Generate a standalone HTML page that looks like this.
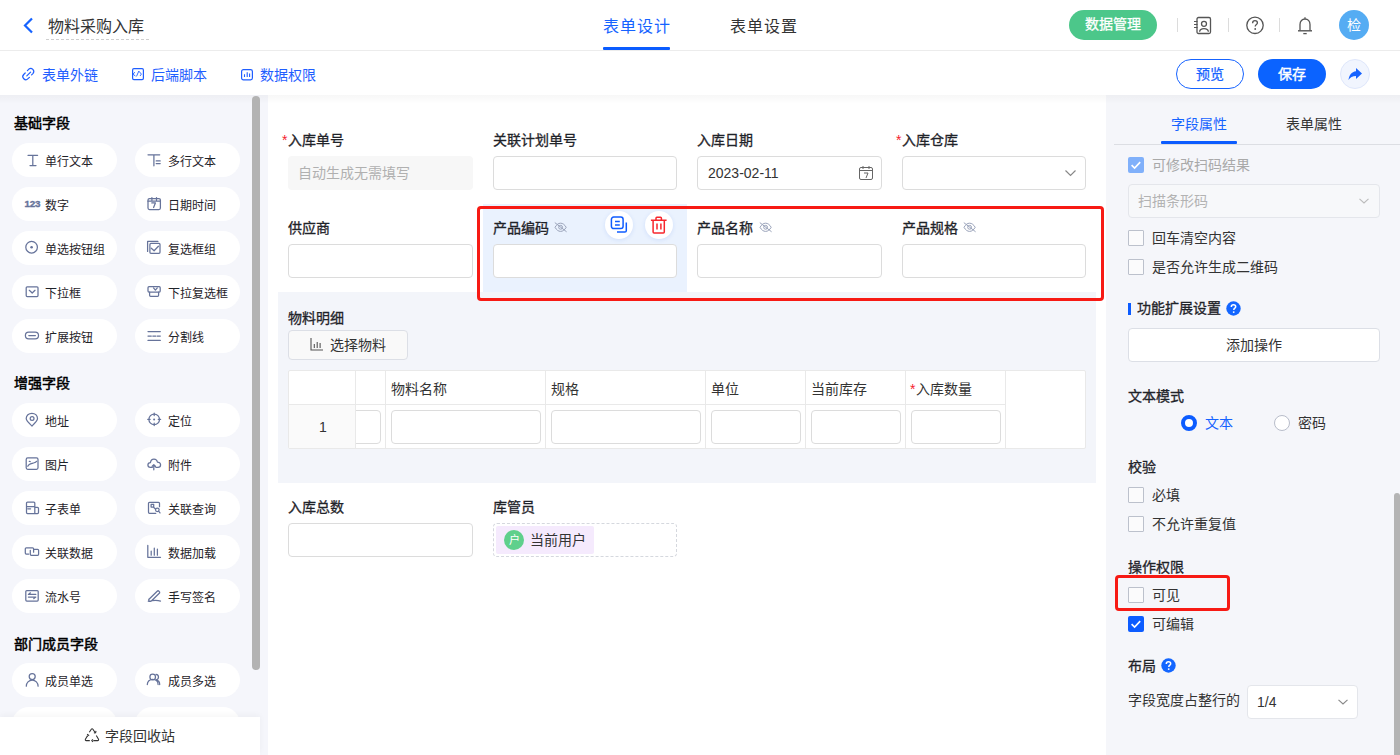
<!DOCTYPE html>
<html lang="zh-CN">
<head>
<meta charset="utf-8">
<style>
*{box-sizing:border-box;margin:0;padding:0}
html,body{width:1400px;height:755px;overflow:hidden;background:#fff}
body{position:relative;font-family:"Liberation Sans",sans-serif;color:#1f2329;font-size:14px}
.a{position:absolute;white-space:nowrap}
.t14{font-size:14px;line-height:20px}
.t16{font-size:16px;line-height:20px}
.t12{font-size:12px;line-height:20px}
.b{font-weight:bold}
.inp{background:#fff;border:1px solid #dcdcdc;border-radius:4px}
.lb{-webkit-text-stroke:0.3px #1f2329;color:#1f2329}
.pill{width:105px;height:34px;border-radius:17px;background:#fff}
.ptx{font-size:12px;line-height:20px;color:#1f2329}
svg{position:absolute;overflow:visible}
</style>
</head>
<body>
<!-- HEADER -->
<div class="a" style="left:0;top:0;width:1400px;height:51px;background:#fff;border-bottom:1px solid #ececec"></div>
<svg style="left:22px;top:17px" width="12" height="17" viewBox="0 0 12 17"><path d="M10 1.5 L3 8.5 L10 15.5" fill="none" stroke="#1663ff" stroke-width="2.2"/></svg>
<div class="a t16" style="left:48px;top:17px;color:#333">物料采购入库</div>
<div class="a" style="left:46px;top:39px;width:104px;height:1px;background:repeating-linear-gradient(90deg,#cfcfcf 0 3px,transparent 3px 5px)"></div>

<div class="a t16" style="left:603px;top:17px;color:#1663ff;letter-spacing:1px">表单设计</div>
<div class="a" style="left:603px;top:47px;width:67px;height:3px;background:#0a5cff;border-radius:1px"></div>
<div class="a t16" style="left:730px;top:17px;color:#333;letter-spacing:1px">表单设置</div>

<div class="a t14" style="left:1069px;top:10px;width:88px;height:30px;border-radius:15px;background:#4cc78a;color:#fff;text-align:center;line-height:29px;-webkit-text-stroke:0.3px #fff">数据管理</div>
<div class="a" style="left:1177px;top:18px;width:1px;height:14px;background:#dcdcdc"></div>
<div class="a" style="left:1228px;top:18px;width:1px;height:14px;background:#dcdcdc"></div>
<div class="a" style="left:1279px;top:18px;width:1px;height:14px;background:#dcdcdc"></div>
<!-- contacts icon -->
<svg style="left:1193px;top:16px" width="19" height="18" viewBox="0 0 19 18"><rect x="4" y="1.5" width="13.5" height="16" rx="1.5" fill="none" stroke="#555" stroke-width="1.3"/><circle cx="11" cy="7.8" r="2.5" fill="none" stroke="#555" stroke-width="1.3"/><path d="M6.6 15.8 C7 11.6 15 11.6 15.4 15.8" fill="none" stroke="#555" stroke-width="1.3"/><path d="M1 5.5h3.5M1 8.5h3.5M1 11.5h3.5" stroke="#555" stroke-width="1.1"/></svg>
<!-- help -->
<svg style="left:1246px;top:16px" width="18" height="18" viewBox="0 0 18 18"><circle cx="9" cy="9.3" r="8.2" fill="none" stroke="#555" stroke-width="1.3"/><path d="M6.6 7.2 C6.6 5.6 7.7 4.7 9 4.7 C10.4 4.7 11.4 5.6 11.4 6.9 C11.4 8.5 9.2 8.6 9.2 10.6" fill="none" stroke="#555" stroke-width="1.3"/><circle cx="9.2" cy="13" r="0.9" fill="#555"/></svg>
<!-- bell -->
<svg style="left:1297px;top:16px" width="16" height="19" viewBox="0 0 16 19"><path d="M8 1.2v1.6" stroke="#555" stroke-width="1.3"/><path d="M3 14.5 V8.5 C3 5.3 5.2 3 8 3 C10.8 3 13 5.3 13 8.5 V14.5" fill="none" stroke="#555" stroke-width="1.3"/><path d="M1 14.8h14" stroke="#555" stroke-width="1.4"/><path d="M6.3 17.6h3.4" stroke="#555" stroke-width="1.3"/></svg>
<div class="a t14" style="left:1339px;top:10px;width:30px;height:30px;border-radius:50%;background:#55acf3;color:#fff;text-align:center;line-height:30px">检</div>

<!-- TOOLBAR -->
<div class="a" style="left:0;top:51px;width:1400px;height:44px;background:#fff"></div>
<svg style="left:22px;top:67px" width="14" height="14" viewBox="0 0 14 14"><path d="M5.4 3.6L6.9 2.1A3 3 0 0 1 11.1 6.3L9.6 7.8M7.4 10.3L6 11.7A3 3 0 0 1 1.7 7.5L3.2 6M4.8 8.9L8.6 5.1" fill="none" stroke="#1f5eff" stroke-width="1.2" stroke-linecap="round"/></svg>
<div class="a t14" style="left:42px;top:65px;color:#1f5eff">表单外链</div>
<svg style="left:132px;top:68px" width="12" height="12" viewBox="0 0 12 12"><rect x="0.6" y="0.6" width="10.8" height="11" rx="1.3" fill="none" stroke="#1f5eff" stroke-width="1.2"/><path d="M3 4.2L0.9 6.2 3.4 8M4.5 8.4L6.8 3.1 9.4 6.1 8 8" fill="none" stroke="#1f5eff" stroke-width="0.9"/></svg>
<div class="a t14" style="left:151px;top:65px;color:#1f5eff">后端脚本</div>
<svg style="left:241px;top:69px" width="12" height="11" viewBox="0 0 12 11"><rect x="0.6" y="0.6" width="10.8" height="10.2" rx="1.8" fill="none" stroke="#1f5eff" stroke-width="1.2"/><path d="M3.5 5.3v2.6M6.2 3.2v4.7M8.6 4.6v3.3" stroke="#1f5eff" stroke-width="1.1"/></svg>
<div class="a t14" style="left:260px;top:65px;color:#1f5eff">数据权限</div>

<div class="a t14" style="left:1176px;top:59px;width:68px;height:30px;border:1px solid #1663ff;border-radius:15px;color:#1663ff;text-align:center;line-height:28px;-webkit-text-stroke:0.25px #1663ff">预览</div>
<div class="a t14" style="left:1258px;top:59px;width:68px;height:30px;border-radius:15px;background:#0b63ff;color:#fff;text-align:center;line-height:30px;-webkit-text-stroke:0.4px #fff">保存</div>
<div class="a" style="left:1340px;top:59px;width:30px;height:30px;border-radius:50%;background:#f1f5fe;border:1px solid #dfe7fb"></div>
<svg style="left:1347px;top:66px" width="16" height="16" viewBox="0 0 16 16"><path d="M9 2 L15 7.5 L9 13 V10 C5.5 10 3.2 11.2 1.5 14 C2 9.5 4.5 5.8 9 5.3 Z" fill="#1663ff"/></svg>

<!-- BODY -->
<div id="side" class="a" style="left:0;top:95px;width:268px;height:660px;background:#f5f6fb"></div>
<div id="canvas" class="a" style="left:268px;top:95px;width:838px;height:660px;background:#fff"></div>
<div id="right" class="a" style="left:1106px;top:95px;width:294px;height:660px;background:#f5f6fa"></div>
<div class="a" style="left:0;top:95px;width:1400px;height:9px;background:linear-gradient(rgba(0,0,0,0.03),rgba(0,0,0,0))"></div>

<!--CANVAS-->
<div class="a" style="left:483px;top:204px;width:204px;height:88px;background:#eaf2fe"></div>
<div class="a" style="left:278px;top:292px;width:818px;height:191px;background:#f3f5fa"></div>
<div class="a t14" style="left:282px;top:130px;color:#f5222d">*</div>
<div class="a t14 lb" style="left:288px;top:130px">入库单号</div>
<div class="a" style="left:288px;top:156px;width:185px;height:34px;background:#f7f7f7;border-radius:4px"></div>
<div class="a t14" style="left:298px;top:163px;color:#b0b0b0">自动生成无需填写</div>
<div class="a t14 lb" style="left:493px;top:130px">关联计划单号</div>
<div class="a inp" style="left:493px;top:156px;width:184px;height:34px;"></div>
<div class="a t14 lb" style="left:697px;top:130px">入库日期</div>
<div class="a inp" style="left:697px;top:156px;width:185px;height:34px;"></div>
<div class="a t14" style="left:708px;top:163px;color:#333">2023-02-11</div>
<svg style="left:858px;top:165px" width="16" height="16" viewBox="0 0 16 16"><rect x="1.5" y="2.5" width="13" height="12" rx="1.5" fill="none" stroke="#666" stroke-width="1"/><path d="M1.5 5.5h13M5 1v3M11 1v3M6 8h4l-2 5" fill="none" stroke="#666" stroke-width="1"/></svg>
<div class="a t14" style="left:896px;top:130px;color:#f5222d">*</div>
<div class="a t14 lb" style="left:902px;top:130px">入库仓库</div>
<div class="a inp" style="left:902px;top:156px;width:184px;height:34px;"></div>
<svg style="left:1064px;top:168px" width="13" height="10" viewBox="0 0 13 10"><path d="M1.5 2.5l5 5 5-5" fill="none" stroke="#888" stroke-width="1.2"/></svg>
<div class="a t14 lb" style="left:288px;top:218px">供应商</div>
<div class="a inp" style="left:288px;top:244px;width:185px;height:34px;"></div>
<div class="a t14 lb" style="left:493px;top:218px">产品编码</div>
<svg style="left:554px;top:222px" width="14" height="11" viewBox="0 0 14 11"><path d="M1 5.3C2.6 2.6 4.4 1.2 6.6 1.2S10.6 2.6 12.2 5.3C10.6 8 8.8 9.4 6.6 9.4S2.6 8 1 5.3Z" fill="none" stroke="#9aa3ba" stroke-width="1"/><circle cx="6.6" cy="5.3" r="1.9" fill="none" stroke="#9aa3ba" stroke-width="1"/><path d="M0.8 0.6L12.6 9.8" stroke="#9aa3ba" stroke-width="1"/></svg>
<div class="a inp" style="left:493px;top:244px;width:184px;height:34px;"></div>
<div class="a t14 lb" style="left:697px;top:218px">产品名称</div>
<svg style="left:759px;top:222px" width="14" height="11" viewBox="0 0 14 11"><path d="M1 5.3C2.6 2.6 4.4 1.2 6.6 1.2S10.6 2.6 12.2 5.3C10.6 8 8.8 9.4 6.6 9.4S2.6 8 1 5.3Z" fill="none" stroke="#9aa3ba" stroke-width="1"/><circle cx="6.6" cy="5.3" r="1.9" fill="none" stroke="#9aa3ba" stroke-width="1"/><path d="M0.8 0.6L12.6 9.8" stroke="#9aa3ba" stroke-width="1"/></svg>
<div class="a inp" style="left:697px;top:244px;width:185px;height:34px;"></div>
<div class="a t14 lb" style="left:902px;top:218px">产品规格</div>
<svg style="left:963px;top:222px" width="14" height="11" viewBox="0 0 14 11"><path d="M1 5.3C2.6 2.6 4.4 1.2 6.6 1.2S10.6 2.6 12.2 5.3C10.6 8 8.8 9.4 6.6 9.4S2.6 8 1 5.3Z" fill="none" stroke="#9aa3ba" stroke-width="1"/><circle cx="6.6" cy="5.3" r="1.9" fill="none" stroke="#9aa3ba" stroke-width="1"/><path d="M0.8 0.6L12.6 9.8" stroke="#9aa3ba" stroke-width="1"/></svg>
<div class="a inp" style="left:902px;top:244px;width:184px;height:34px;"></div>
<div class="a" style="left:605px;top:211px;width:28px;height:28px;border-radius:50%;background:#fff;box-shadow:0 1px 4px rgba(30,90,220,0.12)"></div>
<div class="a" style="left:645px;top:211px;width:28px;height:28px;border-radius:50%;background:#fff;box-shadow:0 1px 4px rgba(30,90,220,0.12)"></div>
<svg style="left:605px;top:211px" width="28" height="28" viewBox="0 0 28 28"><rect x="6.4" y="6.1" width="11.7" height="11.5" rx="2.3" fill="none" stroke="#0f5cff" stroke-width="1.5"/><path d="M10 10.4h4.8M10 13.9h4.8" stroke="#0f5cff" stroke-width="1.5"/><path d="M21.3 11.5v8.2c0 .8-.6 1.4-1.4 1.4H12" fill="none" stroke="#0f5cff" stroke-width="1.5"/></svg>
<svg style="left:645px;top:211px" width="28" height="28" viewBox="0 0 28 28"><path d="M5.9 9.3h15.7M11 9.3V7.2c0-.5.4-.9.9-.9h3.6c.5 0 .9.4.9.9v2.1M8.1 9.3v11.6c0 .5.4 1 1 1h9.2c.5 0 1-.5 1-1V9.3M12 12.5v6M15.9 12.5v6" fill="none" stroke="#f7262c" stroke-width="1.5"/></svg>
<div class="a" style="left:477px;top:206px;width:627px;height:95px;border:3px solid #f71a14;border-radius:4px"></div>
<!--/CANVAS-->
<!--SUB-->
<div class="a t14 lb" style="left:288px;top:308px">物料明细</div>
<div class="a" style="left:288px;top:330px;width:120px;height:30px;background:#f9f9f9;border:1px solid #dcdfe6;border-radius:4px"></div>
<svg style="left:310px;top:337px" width="14" height="14" viewBox="0 0 14 14"><path d="M1 1v12h12M4.3 7v4M7.2 5v6M10.1 6v5" fill="none" stroke="#555" stroke-width="1.1"/></svg>
<div class="a t14" style="left:330px;top:335px;color:#333">选择物料</div>
<div class="a" style="left:288px;top:370px;width:798px;height:79px;background:#fff;border:1px solid #e9e9e9;border-radius:2px"></div>
<div class="a" style="left:289px;top:404px;width:66px;height:44px;background:#fafafa"></div>
<div class="a" style="left:289px;top:404px;width:716px;height:1px;background:#e9e9e9"></div>
<div class="a" style="left:355px;top:371px;width:1px;height:77px;background:#e9e9e9"></div>
<div class="a" style="left:385px;top:371px;width:1px;height:77px;background:#e9e9e9"></div>
<div class="a" style="left:545px;top:371px;width:1px;height:77px;background:#e9e9e9"></div>
<div class="a" style="left:705px;top:371px;width:1px;height:77px;background:#e9e9e9"></div>
<div class="a" style="left:805px;top:371px;width:1px;height:77px;background:#e9e9e9"></div>
<div class="a" style="left:905px;top:371px;width:1px;height:77px;background:#e9e9e9"></div>
<div class="a" style="left:1005px;top:371px;width:1px;height:77px;background:#e9e9e9"></div>
<div class="a t14" style="left:391px;top:379px;color:#333">物料名称</div>
<div class="a t14" style="left:551px;top:379px;color:#333">规格</div>
<div class="a t14" style="left:711px;top:379px;color:#333">单位</div>
<div class="a t14" style="left:811px;top:379px;color:#333">当前库存</div>
<div class="a t14" style="left:916px;top:379px;color:#333">入库数量</div>
<div class="a t14" style="left:910px;top:379px;color:#f5222d">*</div>
<div class="a t14" style="left:319px;top:417px;color:#333">1</div>
<div class="a" style="left:356px;top:410px;width:25px;height:34px;overflow:hidden"><div class="inp" style="position:absolute;left:-40px;top:0;width:65px;height:34px"></div></div>
<div class="a inp" style="left:391px;top:410px;width:150px;height:34px"></div>
<div class="a inp" style="left:551px;top:410px;width:150px;height:34px"></div>
<div class="a inp" style="left:711px;top:410px;width:90px;height:34px"></div>
<div class="a inp" style="left:811px;top:410px;width:90px;height:34px"></div>
<div class="a inp" style="left:911px;top:410px;width:90px;height:34px"></div>
<div class="a t14 lb" style="left:288px;top:497px">入库总数</div>
<div class="a inp" style="left:288px;top:523px;width:185px;height:34px"></div>
<div class="a t14 lb" style="left:493px;top:497px">库管员</div>
<div class="a" style="left:493px;top:523px;width:184px;height:34px;border:1px dashed #d5d8de;border-radius:4px"></div>
<div class="a" style="left:496px;top:526px;width:98px;height:28px;background:#f5eafd;border-radius:2px"></div>
<div class="a" style="left:504px;top:530px;width:20px;height:20px;border-radius:50%;background:#5fd08c;color:#fff;font-size:11px;line-height:20px;text-align:center">户</div>
<div class="a t14" style="left:530px;top:530px;color:#333">当前用户</div>
<!--/SUB-->
<!--RIGHT-->
<div class="a t14" style="left:1171px;top:114px;color:#1663ff">字段属性</div>
<div class="a" style="left:1161px;top:141px;width:76px;height:3px;background:#0c5cff;border-radius:1px"></div>
<div class="a t14" style="left:1286px;top:114px;color:#333">表单属性</div>
<div class="a" style="left:1114px;top:144px;width:286px;height:1px;background:#dcdee3"></div>
<div class="a" style="left:1128px;top:157px;width:16px;height:16px;background:#80b0fa;border-radius:2px"></div>
<svg style="left:1128px;top:157px" width="16" height="16" viewBox="0 0 16 16"><path d="M3.6 8.2l3 2.9 5.6-6" fill="none" stroke="#fff" stroke-width="1.6"/></svg>
<div class="a t14" style="left:1152px;top:155px;color:#a9a9a9">可修改扫码结果</div>
<div class="a" style="left:1128px;top:184px;width:252px;height:34px;background:#f7f8fa;border:1px solid #e4e6eb;border-radius:4px"></div>
<div class="a t14" style="left:1138px;top:191px;color:#b3b3b3">扫描条形码</div>
<svg style="left:1358px;top:196px" width="12" height="10" viewBox="0 0 12 10"><path d="M1.5 2.8l4.5 4.2 4.5-4.2" fill="none" stroke="#bbb" stroke-width="1.1"/></svg>
<div class="a" style="left:1128px;top:230px;width:16px;height:16px;border:1px solid #bcc1cc;background:#fbfbfc;border-radius:1px"></div>
<div class="a t14" style="left:1152px;top:228px;color:#333">回车清空内容</div>
<div class="a" style="left:1128px;top:259px;width:16px;height:16px;border:1px solid #bcc1cc;background:#fbfbfc;border-radius:1px"></div>
<div class="a t14" style="left:1152px;top:257px;color:#333">是否允许生成二维码</div>
<div class="a" style="left:1128px;top:303px;width:3px;height:12px;background:#0c5cff"></div>
<div class="a t14 lb" style="left:1137px;top:298px">功能扩展设置</div>
<svg style="left:1226px;top:301px" width="15" height="15" viewBox="0 0 15 15"><circle cx="7.5" cy="7.5" r="7.2" fill="#1366ff"/><path d="M5.3 5.9c0-1.3 1-2.1 2.2-2.1s2.2.8 2.2 1.9c0 1.5-1.9 1.5-1.9 3.2" fill="none" stroke="#fff" stroke-width="1.5"/><circle cx="7.7" cy="11.1" r="0.95" fill="#fff"/></svg>
<div class="a t14" style="left:1128px;top:328px;width:252px;height:34px;background:#fff;border:1px solid #dcdfe6;border-radius:4px;text-align:center;line-height:32px;color:#333">添加操作</div>
<div class="a t14 lb" style="left:1128px;top:386px">文本模式</div>
<div class="a" style="left:1181px;top:415px;width:16px;height:16px;border-radius:50%;border:4.5px solid #0c5cff;background:#fff"></div>
<div class="a t14" style="left:1205px;top:413px;color:#1663ff">文本</div>
<div class="a" style="left:1274px;top:415px;width:16px;height:16px;border-radius:50%;border:1px solid #b8bdca;background:#fff"></div>
<div class="a t14" style="left:1298px;top:413px;color:#333">密码</div>
<div class="a t14 lb" style="left:1128px;top:457px">校验</div>
<div class="a" style="left:1128px;top:487px;width:16px;height:16px;border:1px solid #bcc1cc;background:#fbfbfc;border-radius:1px"></div>
<div class="a t14" style="left:1152px;top:485px;color:#333">必填</div>
<div class="a" style="left:1128px;top:516px;width:16px;height:16px;border:1px solid #bcc1cc;background:#fbfbfc;border-radius:1px"></div>
<div class="a t14" style="left:1152px;top:514px;color:#333">不允许重复值</div>
<div class="a t14 lb" style="left:1128px;top:557px">操作权限</div>
<div class="a" style="left:1128px;top:587px;width:16px;height:16px;border:1px solid #bcc1cc;background:#fbfbfc;border-radius:1px"></div>
<div class="a t14" style="left:1152px;top:585px;color:#333">可见</div>
<div class="a" style="left:1128px;top:616px;width:16px;height:16px;background:#0c5cff;border-radius:2px"></div>
<svg style="left:1128px;top:616px" width="16" height="16" viewBox="0 0 16 16"><path d="M3.6 8.2l3 2.9 5.6-6" fill="none" stroke="#fff" stroke-width="1.6"/></svg>
<div class="a t14" style="left:1152px;top:614px;color:#333">可编辑</div>
<div class="a" style="left:1115px;top:575px;width:115px;height:36px;border:3px solid #f71a14;border-radius:4px"></div>
<div class="a t14 lb" style="left:1128px;top:656px">布局</div>
<svg style="left:1161px;top:658px" width="15" height="15" viewBox="0 0 15 15"><circle cx="7.5" cy="7.5" r="7.2" fill="#1366ff"/><path d="M5.3 5.9c0-1.3 1-2.1 2.2-2.1s2.2.8 2.2 1.9c0 1.5-1.9 1.5-1.9 3.2" fill="none" stroke="#fff" stroke-width="1.5"/><circle cx="7.7" cy="11.1" r="0.95" fill="#fff"/></svg>
<div class="a t14" style="left:1128px;top:690px;color:#333">字段宽度占整行的</div>
<div class="a" style="left:1247px;top:685px;width:111px;height:34px;background:#fff;border:1px solid #e4e6eb;border-radius:4px"></div>
<div class="a t14" style="left:1257px;top:692px;color:#333">1/4</div>
<svg style="left:1337px;top:697px" width="12" height="10" viewBox="0 0 12 10"><path d="M1.5 2.8l4.5 4.2 4.5-4.2" fill="none" stroke="#888" stroke-width="1.1"/></svg>
<div class="a" style="left:1394px;top:493px;width:6px;height:262px;background:#b4b4b4;border-radius:3px 3px 0 0"></div>
<!--/RIGHT-->
<!--SIDE-->
<div class="a t14" style="left:14px;top:113px;color:#000;-webkit-text-stroke:0.5px #000">基础字段</div>
<div class="a pill" style="left:12px;top:143px"></div>
<svg style="left:20px;top:150px" width="20" height="20" viewBox="0 0 20 20"><path d="M8 5.3h9.6M12.8 5.3v10.2M10 15.5h6" fill="none" stroke="#66739a" stroke-width="1.25" stroke-linecap="round" stroke-linejoin="round"/></svg>
<div class="a ptx" style="left:45px;top:152px">单行文本</div>
<div class="a pill" style="left:135px;top:143px"></div>
<svg style="left:143px;top:150px" width="20" height="20" viewBox="0 0 20 20"><path d="M5 4.8h11.7M10.9 4.8v11M13.2 10.9h4M13.2 13.6h4" fill="none" stroke="#66739a" stroke-width="1.25" stroke-linecap="round" stroke-linejoin="round"/></svg>
<div class="a ptx" style="left:168px;top:152px">多行文本</div>
<div class="a pill" style="left:12px;top:187px"></div>
<svg style="left:20px;top:194px" width="20" height="20" viewBox="0 0 20 20"><text x="4.4" y="13" font-family="Liberation Sans" font-weight="bold" font-size="9.8" fill="#66739a" stroke="#66739a" stroke-width="0.35" letter-spacing="-0.1">123</text></svg>
<div class="a ptx" style="left:45px;top:196px">数字</div>
<div class="a pill" style="left:135px;top:187px"></div>
<svg style="left:143px;top:194px" width="20" height="20" viewBox="0 0 20 20"><rect x="5" y="4.6" width="12.4" height="10.9" rx="1.5" fill="none" stroke="#66739a" stroke-width="1.25" stroke-linecap="round" stroke-linejoin="round"/><path d="M5 7.2h12.4M8.9 3.6v2.4M13.5 3.6v2.4M8.8 8.9h3.6l-1.8 4.6" fill="none" stroke="#66739a" stroke-width="1.25" stroke-linecap="round" stroke-linejoin="round"/></svg>
<div class="a ptx" style="left:168px;top:196px">日期时间</div>
<div class="a pill" style="left:12px;top:231px"></div>
<svg style="left:20px;top:238px" width="20" height="20" viewBox="0 0 20 20"><circle cx="11.6" cy="9.2" r="5.8" fill="none" stroke="#66739a" stroke-width="1.25" stroke-linecap="round" stroke-linejoin="round"/><circle cx="11.6" cy="9.2" r="1.3" fill="#66739a"/></svg>
<div class="a ptx" style="left:45px;top:240px">单选按钮组</div>
<div class="a pill" style="left:135px;top:231px"></div>
<svg style="left:143px;top:238px" width="20" height="20" viewBox="0 0 20 20"><path d="M4.6 13.4V3.4h10.3" fill="none" stroke="#66739a" stroke-width="1.25" stroke-linecap="round" stroke-linejoin="round"/><rect x="6.9" y="5.4" width="10.1" height="9.9" rx="1" fill="none" stroke="#66739a" stroke-width="1.25" stroke-linecap="round" stroke-linejoin="round"/><path d="M8.3 10.2l2.8 2.6 4.3-4.6" fill="none" stroke="#66739a" stroke-width="1.25" stroke-linecap="round" stroke-linejoin="round"/></svg>
<div class="a ptx" style="left:168px;top:240px">复选框组</div>
<div class="a pill" style="left:12px;top:275px"></div>
<svg style="left:20px;top:282px" width="20" height="20" viewBox="0 0 20 20"><rect x="6.2" y="4.8" width="11.8" height="9.8" rx="1" fill="none" stroke="#66739a" stroke-width="1.25" stroke-linecap="round" stroke-linejoin="round"/><path d="M9.3 8.3l2.9 2.7 2.8-2.7" fill="none" stroke="#66739a" stroke-width="1.25" stroke-linecap="round" stroke-linejoin="round"/></svg>
<div class="a ptx" style="left:45px;top:284px">下拉框</div>
<div class="a pill" style="left:135px;top:275px"></div>
<svg style="left:143px;top:282px" width="20" height="20" viewBox="0 0 20 20"><rect x="5" y="4.7" width="12.2" height="5.4" rx="1" fill="none" stroke="#66739a" stroke-width="1.25" stroke-linecap="round" stroke-linejoin="round"/><path d="M10.5 5.9l1.9 2.2 1.9-2.2M6.6 10.1v3.2c0 .6.4 1 1 1h7c.6 0 1-.4 1-1v-3.2" fill="none" stroke="#66739a" stroke-width="1.25" stroke-linecap="round" stroke-linejoin="round"/></svg>
<div class="a ptx" style="left:168px;top:284px">下拉复选框</div>
<div class="a pill" style="left:12px;top:319px"></div>
<svg style="left:20px;top:326px" width="20" height="20" viewBox="0 0 20 20"><rect x="5.4" y="6.2" width="13.1" height="6.6" rx="3.3" fill="none" stroke="#66739a" stroke-width="1.25" stroke-linecap="round" stroke-linejoin="round"/><path d="M8.8 9.6h6.6" fill="none" stroke="#66739a" stroke-width="1.25" stroke-linecap="round" stroke-linejoin="round"/></svg>
<div class="a ptx" style="left:45px;top:328px">扩展按钮</div>
<div class="a pill" style="left:135px;top:319px"></div>
<svg style="left:143px;top:326px" width="20" height="20" viewBox="0 0 20 20"><path d="M5 5.6h12.3M5 14.4h12.3M5 10h3.3M9.8 10h3M14.2 10h3.1" fill="none" stroke="#66739a" stroke-width="1.25" stroke-linecap="round" stroke-linejoin="round"/></svg>
<div class="a ptx" style="left:168px;top:328px">分割线</div>
<div class="a t14" style="left:14px;top:373px;color:#000;-webkit-text-stroke:0.5px #000">增强字段</div>
<div class="a pill" style="left:12px;top:403px"></div>
<svg style="left:20px;top:410px" width="20" height="20" viewBox="0 0 20 20"><path d="M12 16C9 13.2 6.2 10.9 6.2 8.6 6.2 5.4 8.8 3.3 11.9 3.3 15 3.3 17.5 5.4 17.5 8.6 17.5 10.9 15 13.2 12 16Z" fill="none" stroke="#66739a" stroke-width="1.25" stroke-linecap="round" stroke-linejoin="round"/><circle cx="12.1" cy="8.5" r="1.9" fill="none" stroke="#66739a" stroke-width="1.25" stroke-linecap="round" stroke-linejoin="round"/></svg>
<div class="a ptx" style="left:45px;top:412px">地址</div>
<div class="a pill" style="left:135px;top:403px"></div>
<svg style="left:143px;top:410px" width="20" height="20" viewBox="0 0 20 20"><circle cx="11.2" cy="9.4" r="5.3" fill="none" stroke="#66739a" stroke-width="1.25" stroke-linecap="round" stroke-linejoin="round"/><path d="M11.2 3.2v2.4M11.2 13.2v2.4M4.8 9.4h2.3M15.3 9.4h2.3" fill="none" stroke="#66739a" stroke-width="1.25" stroke-linecap="round" stroke-linejoin="round"/><circle cx="11.1" cy="9.6" r="1" fill="#66739a"/></svg>
<div class="a ptx" style="left:168px;top:412px">定位</div>
<div class="a pill" style="left:12px;top:447px"></div>
<svg style="left:20px;top:454px" width="20" height="20" viewBox="0 0 20 20"><rect x="6.2" y="3.9" width="11.8" height="11.4" rx="1.5" fill="none" stroke="#66739a" stroke-width="1.25" stroke-linecap="round" stroke-linejoin="round"/><path d="M7.8 12.3C9 9.5 11.5 9.3 13.5 9 15.3 8.7 16.3 8 16.6 7.3M9.3 7.3l.9.2" fill="none" stroke="#66739a" stroke-width="1.25" stroke-linecap="round" stroke-linejoin="round"/></svg>
<div class="a ptx" style="left:45px;top:456px">图片</div>
<div class="a pill" style="left:135px;top:447px"></div>
<svg style="left:143px;top:454px" width="20" height="20" viewBox="0 0 20 20"><path d="M9.3 13.4H7.4C5.9 13.4 4.9 12.3 4.9 11 4.9 9.6 6 8.5 7.5 8.5 7.7 6.4 9 5 11 5 12.9 5 14.1 6.3 14.4 8 16 8 17.6 9.2 17.6 10.8 17.6 12.3 16.5 13.4 15 13.4H12.9M10.8 15.8v-5M9.2 12.3l1.6-1.6 1.6 1.6" fill="none" stroke="#66739a" stroke-width="1.25" stroke-linecap="round" stroke-linejoin="round"/></svg>
<div class="a ptx" style="left:168px;top:456px">附件</div>
<div class="a pill" style="left:12px;top:491px"></div>
<svg style="left:20px;top:498px" width="20" height="20" viewBox="0 0 20 20"><path d="M14.8 9.4V5c0-.6-.4-1-1-1H7.5c-.6 0-1 .4-1 1v9.5c0 .6.4 1 1 1h10c.6 0 1-.4 1-1V10.4c0-.6-.4-1-1-1h-2.7v6.1M6.5 8.5h8.3M7.8 10.8h2.8" fill="none" stroke="#66739a" stroke-width="1.25" stroke-linecap="round" stroke-linejoin="round"/></svg>
<div class="a ptx" style="left:45px;top:500px">子表单</div>
<div class="a pill" style="left:135px;top:491px"></div>
<svg style="left:143px;top:498px" width="20" height="20" viewBox="0 0 20 20"><path d="M12.8 15.3H6.5c-.6 0-1-.4-1-1V5.3c0-.6.4-1 1-1h9c.6 0 1 .4 1 1v3.4" fill="none" stroke="#66739a" stroke-width="1.25" stroke-linecap="round" stroke-linejoin="round"/><rect x="8.1" y="6.4" width="2.6" height="2.7" fill="none" stroke="#66739a" stroke-width="1.25" stroke-linecap="round" stroke-linejoin="round"/><circle cx="14.3" cy="11.8" r="1.8" fill="none" stroke="#66739a" stroke-width="1.25" stroke-linecap="round" stroke-linejoin="round"/><path d="M10.8 9.5l1.7 1.4M15.6 13.2l1.4 1.7" fill="none" stroke="#66739a" stroke-width="1.25" stroke-linecap="round" stroke-linejoin="round"/></svg>
<div class="a ptx" style="left:168px;top:500px">关联查询</div>
<div class="a pill" style="left:12px;top:535px"></div>
<svg style="left:20px;top:542px" width="20" height="20" viewBox="0 0 20 20"><path d="M8.7 12H6.3c-.6 0-1-.4-1-1V6.8c0-.6.4-1 1-1h6.3c.6 0 1 .4 1 1v3.4M10.3 8.3v4c0 .6.4 1 1 1h6.3c.6 0 1-.4 1-1V8.3c0-.6-.4-1-1-1h-3.9" fill="none" stroke="#66739a" stroke-width="1.25" stroke-linecap="round" stroke-linejoin="round"/></svg>
<div class="a ptx" style="left:45px;top:544px">关联数据</div>
<div class="a pill" style="left:135px;top:535px"></div>
<svg style="left:143px;top:542px" width="20" height="20" viewBox="0 0 20 20"><path d="M4.8 3.4v11.9h12.7M8.2 9v4.2M11.3 6v7.2M14.4 7v6.2" fill="none" stroke="#66739a" stroke-width="1.25" stroke-linecap="round" stroke-linejoin="round"/></svg>
<div class="a ptx" style="left:168px;top:544px">数据加载</div>
<div class="a pill" style="left:12px;top:579px"></div>
<svg style="left:20px;top:586px" width="20" height="20" viewBox="0 0 20 20"><rect x="5.8" y="4.5" width="12.4" height="10.5" rx="1" fill="none" stroke="#66739a" stroke-width="1.25" stroke-linecap="round" stroke-linejoin="round"/><path d="M8.4 8.4h7.4L10.8 8.4 8.4 8.4l2-1.6M8.4 11h7.4l-2 1.6" fill="none" stroke="#66739a" stroke-width="1.25" stroke-linecap="round" stroke-linejoin="round"/></svg>
<div class="a ptx" style="left:45px;top:588px">流水号</div>
<div class="a pill" style="left:135px;top:579px"></div>
<svg style="left:143px;top:586px" width="20" height="20" viewBox="0 0 20 20"><path d="M6 13.2L14.2 5.2c.5-.5 1.2-.5 1.7 0l.4.4c.5.5.5 1.2 0 1.7L8.1 15.3H5.8V13.2ZM5.3 15.1c3-.5 8.5-1.3 12.2 0" fill="none" stroke="#66739a" stroke-width="1.25" stroke-linecap="round" stroke-linejoin="round"/></svg>
<div class="a ptx" style="left:168px;top:588px">手写签名</div>
<div class="a t14" style="left:14px;top:634px;color:#000;-webkit-text-stroke:0.5px #000">部门成员字段</div>
<div class="a pill" style="left:12px;top:663px"></div>
<svg style="left:20px;top:670px" width="20" height="20" viewBox="0 0 20 20"><circle cx="12.2" cy="6.6" r="3" fill="none" stroke="#66739a" stroke-width="1.25" stroke-linecap="round" stroke-linejoin="round"/><path d="M6.3 16.2c0-3.4 2.6-6.2 5.9-6.2s5.9 2.8 5.9 6.2" fill="none" stroke="#66739a" stroke-width="1.25" stroke-linecap="round" stroke-linejoin="round"/></svg>
<div class="a ptx" style="left:45px;top:672px">成员单选</div>
<div class="a pill" style="left:135px;top:663px"></div>
<svg style="left:143px;top:670px" width="20" height="20" viewBox="0 0 20 20"><circle cx="9.7" cy="7" r="2.8" fill="none" stroke="#66739a" stroke-width="1.25" stroke-linecap="round" stroke-linejoin="round"/><path d="M4.3 14.6c0-3.2 2.4-5.2 5.4-5.2s5.4 2 5.4 5.2M13 4.3c1.5.2 2.5 1.3 2.5 2.8s-1 2.5-2.3 2.8c2.1.5 3.5 2.3 3.5 4.7" fill="none" stroke="#66739a" stroke-width="1.25" stroke-linecap="round" stroke-linejoin="round"/></svg>
<div class="a ptx" style="left:168px;top:672px">成员多选</div>
<div class="a pill" style="left:12px;top:707px"></div>
<div class="a pill" style="left:135px;top:707px"></div>
<!--/SIDE-->
<!--SIDEX-->
<div class="a" style="left:252px;top:96px;width:8px;height:574px;background:#b3b3b3;border-radius:4px"></div>
<div class="a" style="left:0;top:717px;width:260px;height:38px;background:#fff;box-shadow:0 -2px 6px rgba(0,0,0,0.04)"></div>
<svg style="left:80px;top:722px" width="24" height="24" viewBox="0 0 24 24"><path d="M9.3 10.3L11.3 7.2c.4-.6 1.2-.6 1.6 0l2 3M16.3 13.5l2.2 3.8c.3.6-.1 1.3-.8 1.3h-4.4M9.8 18.6H6.2c-.7 0-1.1-.7-.8-1.3l2.1-3.6" fill="none" stroke="#333" stroke-width="1.1"/><path d="M13.9 10.9l1.7-.2.4-1.9M7.1 12.3l1.5 1 -1.6 1.1M12.9 17.3l-1.1 1.3 1.1 1.2" fill="none" stroke="#333" stroke-width="1.1"/></svg>
<div class="a t14" style="left:105px;top:726px;color:#333">字段回收站</div>
<!--/SIDEX-->
</body>
</html>
